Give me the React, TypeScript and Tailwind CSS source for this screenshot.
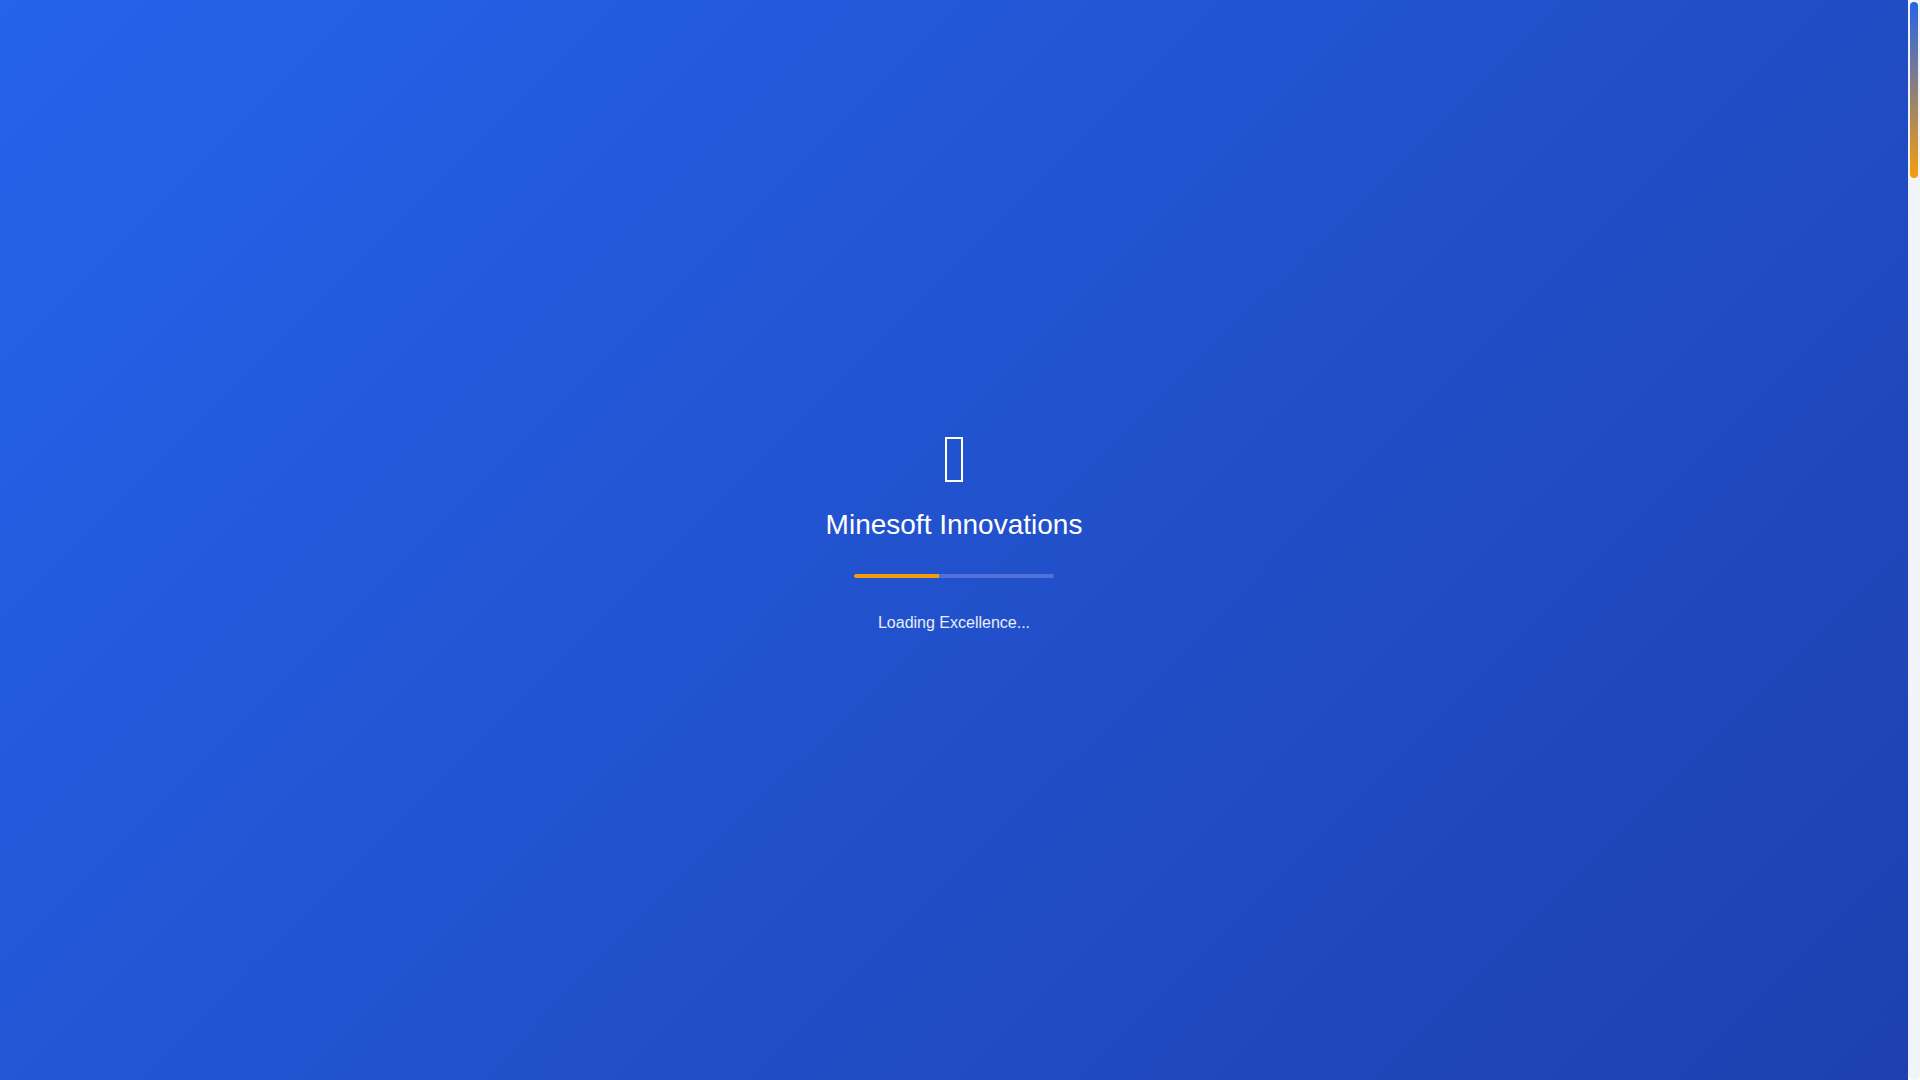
export default function App() {
  const progress = 42.5;

  return (
    <div className="h-screen flex overflow-hidden font-['Liberation_Sans',Arial,sans-serif]">
      {/* loading screen */}
      <div className="flex-1 flex flex-col items-center justify-center pb-[8px] bg-[linear-gradient(135deg,#2563eb_0%,#1e40af_100%)] text-white">
        <div className="w-[18px] h-[45px] border-2 border-white mb-[26px]" aria-hidden="true" />
        <h1 className="text-[28px] leading-[34px] font-normal">Minesoft Innovations</h1>
        <div className="mt-[32px] w-[200px] h-[4px] rounded-full bg-white/20 overflow-hidden">
          <div className="h-full bg-[#f59e0b] rounded-l-full" style={{ width: `${progress}%` }} />
        </div>
        <p className="mt-[33px] text-[16px] leading-[24px] text-white/90">Loading Excellence...</p>
      </div>
      {/* page scrollbar */}
      <div className="w-[12px] bg-[#f1f5f9] rounded-b-full flex flex-col items-center pt-[2px]">
        <div className="w-[8px] h-[176px] rounded-full bg-[linear-gradient(180deg,#2563eb,#f59e0b)]" />
      </div>
    </div>
  );
}
